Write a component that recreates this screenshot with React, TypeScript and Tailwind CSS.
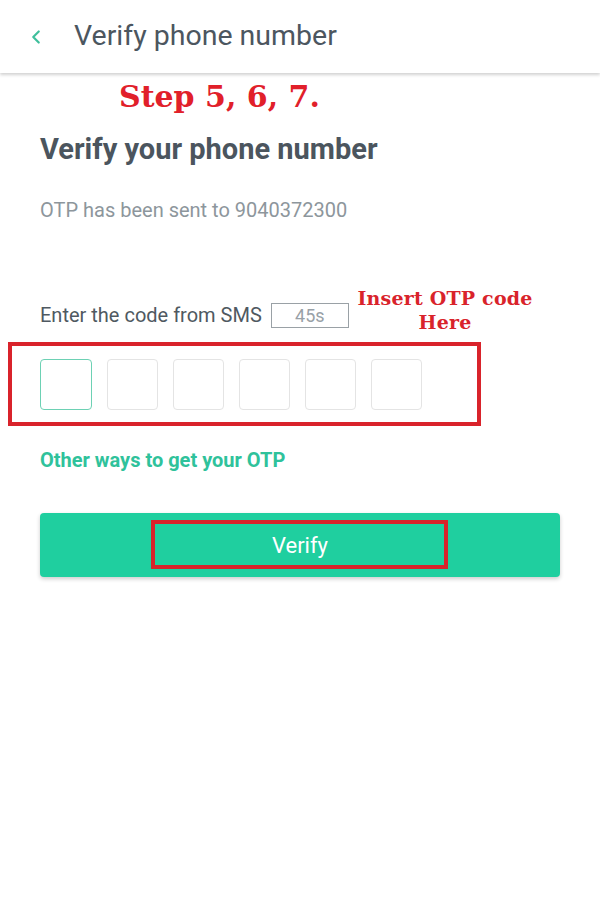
import { ChevronLeft } from 'lucide-react';

const App = () => {
  const boxes = [0, 1, 2, 3, 4, 5];
  return (
    <div className="w-[600px] h-[921px] bg-white font-['Roboto',sans-serif] relative overflow-hidden">
      {/* Header */}
      <header className="h-[73px] flex items-center shadow-[0_2px_3px_rgba(0,0,0,0.18)] relative z-10 bg-white">
        <ChevronLeft className="w-[22px] h-[22px] text-[#3fbf9c] ml-[25px]" strokeWidth={2.4} />
        <h2 className="ml-[27px] text-[28.5px] text-[#4c565f] leading-none">Verify phone number</h2>
      </header>

      {/* Annotation */}
      <div className="pl-[119px] pt-[4px] h-[48px] text-[30px] font-bold text-[#e1202a] font-['DejaVu_Serif',serif] leading-[40px]">
        Step 5, 6, 7.
      </div>

      <div className="px-[40px]">
        <h1 className="mt-[12px] text-[29px] font-bold text-[#4b555e] leading-[32px]">Verify your phone number</h1>
        <p className="mt-[32px] text-[20px] text-[#8d969c] leading-[26px]">OTP has been sent to 9040372300</p>

        <div className="mt-[79px] flex items-center relative">
          <span className="text-[20px] text-[#4f5961] leading-[26px]">Enter the code from SMS</span>
          <span className="ml-[9px] w-[78px] h-[25px] border border-[#9aa1a6] flex items-center justify-center text-[18px] text-[#99a1a7]">45s</span>
          <div className="absolute left-[317px] top-[-16px] w-[176px] text-center text-[19px] leading-[24px] font-bold text-[#d9232b] font-['DejaVu_Serif',serif] tracking-[0.2px]">
            Insert OTP code
            <br />
            Here
          </div>
        </div>

        <div className="relative mt-[31px]">
          <div className="flex gap-[15px]">
            {boxes.map((b) => (
              <div
                key={b}
                className={
                  b === 0
                    ? 'w-[52px] h-[51px] rounded-[4px] border border-[#6dd1b4]'
                    : 'w-[51px] h-[51px] rounded-[4px] border border-[#e4e4e4]'
                }
              />
            ))}
          </div>
          <div className="absolute left-[-32px] top-[-17px] w-[473px] h-[84px] border-[4px] border-[#d9232b] pointer-events-none" />
        </div>

        <a className="block mt-[37px] text-[20px] font-bold text-[#2fc29b] leading-[26px]">Other ways to get your OTP</a>

        <button className="relative mt-[40px] w-[520px] h-[64px] rounded-[4px] bg-[#1fcf9f] shadow-[0_2px_4px_rgba(0,0,0,0.2)] text-white text-[22px] flex items-center justify-center">
          Verify
          <span className="absolute left-[111px] top-[7px] w-[297px] h-[49px] border-[4px] border-[#d9232b]" />
        </button>
      </div>
    </div>
  );
};

export default App;
